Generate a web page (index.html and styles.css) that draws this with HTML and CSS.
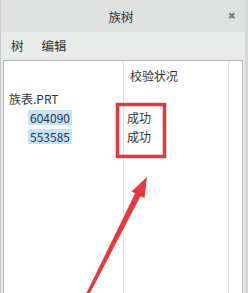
FILE: index.html
```html
<!DOCTYPE html>
<html lang="zh">
<head>
  <meta charset="UTF-8" />
  <title>族树</title>
  <link rel="stylesheet" href="styles.css">
</head>
<body>
  <div class="window">
    <!-- Title bar -->
    <div class="titlebar">
      <span class="title">族树</span>
      <span class="close">&#x2716;</span>
    </div>

    <!-- Menu -->
    <div class="menubar">
      <span class="menu-item">树</span>
      <span class="menu-item">编辑</span>
    </div>

    <!-- Tree table -->
    <div class="panel">
      <div class="col col-name">
        <div class="head"></div>
        <div class="row root">族表.PRT</div>
        <div class="row child"><span class="sel">604090</span></div>
        <div class="row child"><span class="sel">553585</span></div>
      </div>
      <div class="col col-status">
        <div class="head">校验状况</div>
        <div class="row"></div>
        <div class="row">成功</div>
        <div class="row">成功</div>
      </div>
      <div class="col col-pad">
        <div class="head"></div>
      </div>
    </div>

    <!-- Annotation overlay -->
    <svg class="marks" width="248" height="293" viewBox="0 0 248 293">
      <rect x="117.5" y="104.5" width="47" height="52" fill="none" stroke="#dc3a3f" stroke-width="3.5" />
      <polygon fill="#e8383d" points="147,177 144.5,198 140.5,196.2 88.5,296 85.5,295 135.1,193.4 131.5,191.5" />
    </svg>
  </div>
</body>
</html>
```

FILE: styles.css
```css
* {
  box-sizing: border-box;
  margin: 0;
  padding: 0;
}

html, body {
  width: 248px;
  height: 293px;
  overflow: hidden;
  font-family: "Noto Sans CJK SC", "Noto Sans", sans-serif;
  color: #333;
  background: #e9eaea;
}

.window {
  position: relative;
  display: flex;
  flex-direction: column;
  width: 248px;
  height: 293px;
  border-left: 1px solid #c9c9c9;
  border-right: 3px solid #d6d7d7;
}

.titlebar {
  position: relative;
  display: flex;
  align-items: center;
  justify-content: center;
  height: 32px;
  background: #dfe0e0;
  font-size: 12.5px;
}

.title {
  margin-left: -4px;
}

.close {
  position: absolute;
  right: 9px;
  top: 9px;
  font-size: 9px;
  color: #777;
}

.menubar {
  display: flex;
  align-items: center;
  height: 26px;
  padding-left: 10px;
  background: #e9eaea;
  font-size: 12.5px;
}

.menu-item {
  margin-right: 18px;
}

.panel {
  display: flex;
  flex: 1;
  margin: 2px 2px 0 2px;
  background: #fff;
  border: 1px solid #b5b5b5;
  border-bottom: none;
  font-size: 12px;
}

.col {
  display: flex;
  flex-direction: column;
  border-right: 1px solid #e2e2e2;
}

.col-name {
  width: 120px;
}

.col-status {
  width: 105px;
}

.col-pad {
  flex: 1;
  border-right: none;
}

.head {
  display: flex;
  align-items: center;
  height: 28px;
  padding-left: 6px;
}

.row {
  display: flex;
  align-items: center;
  height: 19px;
  padding-left: 3px;
}

.row.root {
  padding-left: 5px;
}

.row.child {
  padding-left: 24px;
}

.sel {
  padding: 0 2px;
  line-height: 15px;
  background: #c2e3f8;
}

.marks {
  position: absolute;
  left: -1px;
  top: 0;
  pointer-events: none;
}
```
